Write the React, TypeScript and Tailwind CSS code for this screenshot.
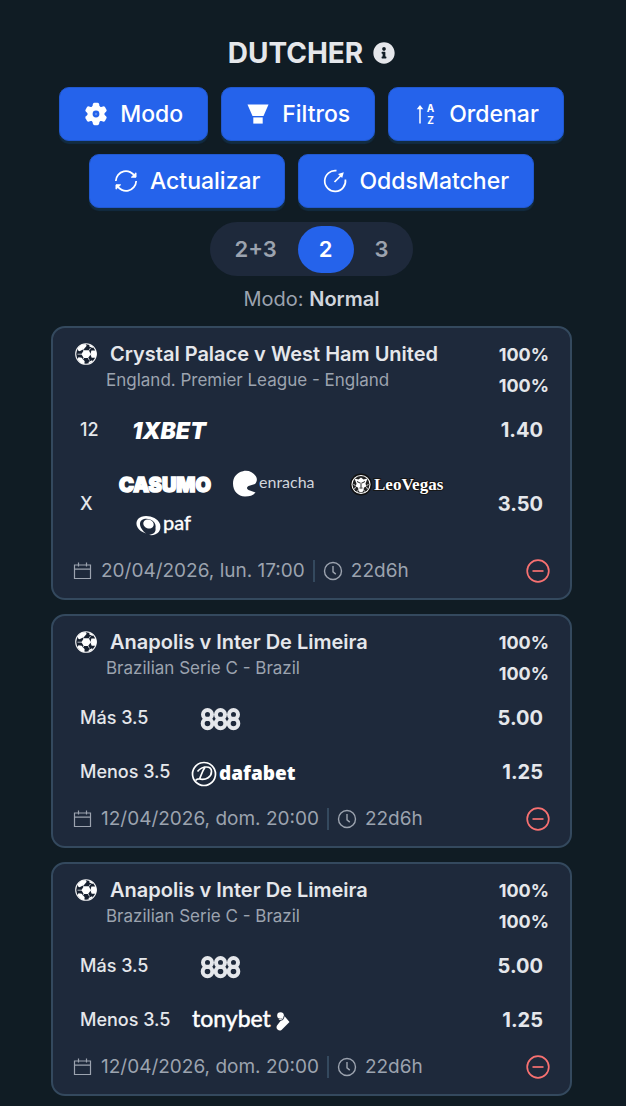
import type { ReactNode } from "react";
import { FaInfoCircle } from "react-icons/fa";

function GearIcon() {
  return (
    <svg viewBox="0 0 24 24" className="size-6" fill="currentColor" aria-hidden="true">
      <path
        fillRule="evenodd"
        d="M12 3.500a8.500 8.500 0 1 0 0 17a8.500 8.500 0 0 0 0-17zM12 8.600a3.400 3.400 0 1 1 0 6.800a3.400 3.400 0 0 1 0-6.800z"
      />
      {[0, 60, 120, 180, 240, 300].map((a) => (
        <path key={a} transform={`rotate(${a} 12 12)`} d="M8 6.500L8.900 2.200Q9.200 .8 10.500 .8h3q1.300 0 1.600 1.400L16 6.500z" />
      ))}
      <circle cx="12" cy="12" r="1.200" opacity=".25" />
    </svg>
  );
}

function FilterIcon() {
  return (
    <svg viewBox="0 0 24 24" className="size-6" fill="currentColor" aria-hidden="true">
      <path d="M1.500 2.500h21L17.500 14h-11z" />
      <path d="M7.300 15.400h9.400v6.200H7.300z" />
    </svg>
  );
}

function SortIcon() {
  return (
    <svg viewBox="0 0 24 24" className="size-6" fill="none" stroke="currentColor" strokeWidth="1.500" aria-hidden="true">
      <path d="M7 21.500V6" />
      <path d="M3.700 7.300L7 3l3.300 4.300z" fill="currentColor" stroke="none" />
      <g fill="currentColor" stroke="none" fontFamily="Inter, sans-serif" fontSize="10" fontWeight="700" textAnchor="middle">
        <text x="17.500" y="9.800">A</text>
        <text x="17.500" y="21.600">Z</text>
      </g>
    </svg>
  );
}

function RefreshIcon() {
  return (
    <svg viewBox="0 0 24 24" className="size-6" fill="none" stroke="currentColor" strokeWidth="1.700" aria-hidden="true">
      <path d="M1.800 12A10.200 10.200 0 0 1 21 7.600" />
      <path d="M22.200 12A10.200 10.200 0 0 1 3 16.400" />
      <path d="M22 3.800v4.400h-4.600z" fill="currentColor" strokeWidth="1" />
      <path d="M2 20.200v-4.400h4.600z" fill="currentColor" strokeWidth="1" />
    </svg>
  );
}

function GaugeIcon() {
  return (
    <svg viewBox="0 0 24 24" className="size-6" fill="none" stroke="currentColor" strokeWidth="1.700" aria-hidden="true">
      <path d="M13.500 1.700A10.400 10.400 0 1 0 22.400 10.500" />
      <path d="M11.500 13l7-7" />
      <path d="M15 4.900L20.800 3.200l-1.600 5.900z" fill="currentColor" stroke="none" />
    </svg>
  );
}

function BallIcon() {
  return (
    <svg viewBox="0 0 24 24" className="size-6 shrink-0" aria-hidden="true">
      <circle cx="12" cy="12" r="10.300" fill="#17202f" stroke="#f4f4f5" strokeWidth="1.100" />
      <g fill="#ffffff">
        <path d="M9.800 8.300h5l2 3.900-2.700 3.900H9.700l-2.300-3.900z" />
        <path d="M4 5.800L7.500 2.800 11.500 2l1.200 1.800-2.700 3.300-4.500 2.200-1.800-1z" />
        <path d="M17.400 8.400h4.300l1 3.600-1 3.800h-4l-1.300-3.200z" />
        <path d="M4.500 15.200l3.200.6 3 3.400-.5 3-4-1.700-2.800-3.400z" />
        <path d="M15.500 2.500l3.800 2.300-.8 1.300-3.200-1.600zM14.500 20l3.500-1.700.8.900-3.800 2.500z" />
      </g>
      <path d="M3.500 12.200h4.500M16 12.300h2M10 9L8.500 6.500M15 8.500l1.500-2.500M10 16l-2 2M14.200 16l1.300 2.500" stroke="#dfe3e8" strokeWidth=".8" />
    </svg>
  );
}

function CalendarIcon() {
  return (
    <svg viewBox="0 0 20 20" className="size-5" fill="none" stroke="currentColor" strokeWidth="1.200" aria-hidden="true">
      <path d="M1.500 4h16v13.500h-16zM1.500 8.200h16M5.500 1.500v4M13.500 1.500v4" />
    </svg>
  );
}

function ClockIcon() {
  return (
    <svg viewBox="0 0 20 20" className="size-5" fill="none" stroke="currentColor" strokeWidth="1.400" aria-hidden="true">
      <circle cx="10" cy="10" r="8.500" />
      <path d="M10 5v5.800l2.800 2.300" />
    </svg>
  );
}

function MinusIcon() {
  return (
    <svg viewBox="0 0 24 24" className="size-6" fill="none" stroke="currentColor" strokeWidth="1.700" aria-hidden="true">
      <circle cx="12" cy="12" r="10.800" />
      <path d="M6.500 12h11" />
    </svg>
  );
}

function Logo({ name, children }: { name: string; children: ReactNode }) {
  return (
    <svg viewBox="0 0 110 40" width="110" height="40" role="img" aria-label={name} className="block shrink-0" fill="#ffffff">
      {children}
    </svg>
  );
}

const logos: Record<string, ReactNode> = {
  "1XBET": (
    <text x="15" y="29" fontFamily="Inter, sans-serif" fontSize="23" fontWeight="900" fontStyle="italic">1XBET</text>
  ),
  Casumo: (
    <text x="2" y="28" fontFamily="Inter, sans-serif" fontSize="20" fontWeight="900" stroke="#ffffff" strokeWidth="1.500">CASUMO</text>
  ),
  enracha: (
    <>
      <path d="M29 12.500C26 8 21 6 16 7.200C10 8.400 6 13 6 19.500C6 27 11 32.500 18 32.500C22.500 32.500 26 31.500 28.500 28.500L21.500 26C19.500 25 19.500 23 21.500 22L28 20C30 18 30.500 15 29 12.500Z" />
      <text x="32" y="24" fontFamily="Lato, sans-serif" fontSize="16" fill="#d1d5db">enracha</text>
    </>
  ),
  LeoVegas: (
    <>
      <circle cx="24" cy="20.500" r="10.300" stroke="#111111" strokeWidth="1.500" />
      <circle cx="24" cy="20.500" r="8.500" fill="#222222" />
      <g transform="translate(-1.500 .5)">
        <path d="M19 14l4 1 2.500-2 2.500 2 4-1-2 5 .8 3-2.300 1-1 4-2 1-2-1-1-4-2.300-1 .8-3z" />
        <path d="M21.500 17l3 1.500M29.500 17l-3 1.500M24 23.500h3M25.500 18v5" stroke="#222222" strokeWidth="1" />
        <path d="M18 20l2 1M18.500 24l2-1M33 20l-2 1M32.500 24l-2-1M22 27l1-2M29 27l-1-2" stroke="#ffffff" strokeWidth=".8" />
      </g>
      <text x="37" y="26" fontFamily="Liberation Serif, serif" fontSize="17" fontWeight="700" stroke="#161616" strokeWidth="2" paintOrder="stroke">LeoVegas</text>
    </>
  ),
  paf: (
    <>
      <path d="M29 29.500C21 27 17 20 21 15C26 9.500 40 12 43 20C45 27 40 32 32 31C37 30 39 28 38.500 24C40 18 33 13.500 27 15C20 17 23 25 29 29.500Z" />
      <ellipse cx="31.500" cy="20" rx="5.300" ry="4.500" transform="rotate(18 31.500 20)" />
      <text x="46" y="26" fontFamily="Lato, sans-serif" fontSize="20" fontWeight="400" stroke="#ffffff" strokeWidth=".4">paf</text>
    </>
  ),
  "888": (
    <g fill="none" stroke="#e5e7eb" strokeWidth="4">
      {[19, 32, 45].map((x) => (
        <g key={x}>
          <circle cx={x + 0.5} cy="16.500" r="4.500" />
          <circle cx={x + 0.5} cy="25.500" r="4.800" />
        </g>
      ))}
    </g>
  ),
  dafabet: (
    <>
      <circle cx="16" cy="22" r="11.500" fill="none" stroke="#ffffff" strokeWidth="1.700" />
      <path d="M17.500 14.500C14.500 18.500 13.500 22.500 11.500 27C18.500 28.500 23.500 24.500 23.500 19.500C23.500 13.500 14.500 13.500 9.500 19.500M7.500 28.500C9.500 26 11.500 26.500 14.500 27.500" fill="none" stroke="#ffffff" strokeWidth="1.700" />
      <text x="31" y="28" fontFamily="Open Sans, sans-serif" fontSize="19" fontWeight="800">dafabet</text>
    </>
  ),
  tonybet: (
    <>
      <text x="4" y="27" fontFamily="Lato, sans-serif" fontSize="23" fontWeight="400" stroke="#ffffff" strokeWidth=".5">tonybet</text>
      <path d="M93.500 12.500a3.500 3.500 0 1 1-4 5.500l3 3-3.500 4.500a3.300 3.300 0 0 0 4.500 4.500L101.500 22z" />
      <circle cx="92.500" cy="15.500" r="3.300" />
      <path d="M90 21.500l5-2 1.500-4" fill="none" stroke="#1e293b" strokeWidth=".9" />
    </>
  ),
};

type Match = {
  id: number;
  title: string;
  league: string;
  date: string;
  remaining: string;
  outcomes: { label: string; odds: string; books: string[] }[];
};

const matches: Match[] = [
  {
    id: 1,
    title: "Crystal Palace v West Ham United",
    league: "England. Premier League - England",
    date: "20/04/2026, lun. 17:00",
    remaining: "22d6h",
    outcomes: [
      { label: "12", odds: "1.40", books: ["1XBET"] },
      { label: "X", odds: "3.50", books: ["Casumo", "enracha", "LeoVegas", "paf"] },
    ],
  },
  {
    id: 2,
    title: "Anapolis v Inter De Limeira",
    league: "Brazilian Serie C - Brazil",
    date: "12/04/2026, dom. 20:00",
    remaining: "22d6h",
    outcomes: [
      { label: "Más 3.5", odds: "5.00", books: ["888"] },
      { label: "Menos 3.5", odds: "1.25", books: ["dafabet"] },
    ],
  },
  {
    id: 3,
    title: "Anapolis v Inter De Limeira",
    league: "Brazilian Serie C - Brazil",
    date: "12/04/2026, dom. 20:00",
    remaining: "22d6h",
    outcomes: [
      { label: "Más 3.5", odds: "5.00", books: ["888"] },
      { label: "Menos 3.5", odds: "1.25", books: ["tonybet"] },
    ],
  },
];

function ActionButton({ icon, children }: { icon: ReactNode; children: ReactNode }) {
  return (
    <button
      type="button"
      className="flex h-[54px] items-center gap-3 rounded-[10px] border border-[#2158cf] bg-[#2563eb] px-6 text-[23px] leading-8 font-medium text-white shadow-[0_3px_1px_#122c42]"
    >
      {icon}
      {children}
    </button>
  );
}

function MatchCard({ match }: { match: Match }) {
  return (
    <article className="rounded-[14px] border-2 border-[#34495e] bg-[#1e293b] pb-[7px]">
      <header className="flex justify-between px-[21px] pt-[11px]">
        <div>
          <div className="flex h-[30px] items-center gap-3">
            <BallIcon />
            <h2 className="text-[20px] leading-7 font-semibold text-gray-200">{match.title}</h2>
          </div>
          <p className="pl-8 text-[17px] leading-[22px] text-[#9ca3af]">{match.league}</p>
        </div>
        <div className="h-16 text-right text-[18px] leading-[31px] font-bold text-gray-200">
          <p>100%</p>
          <p>100%</p>
        </div>
      </header>
      <table className="w-full border-collapse">
        <tbody>
          {match.outcomes.map((o) => (
            <tr key={o.label}>
              <th scope="row" className="pr-[18px] pl-[27px] text-left text-[18px] leading-6 font-medium whitespace-nowrap text-gray-200">
                {o.label}
              </th>
              <td className="w-full py-[7px]">
                <div className="flex flex-wrap">
                  {o.books.map((b) => (
                    <Logo key={b} name={b}>{logos[b]}</Logo>
                  ))}
                </div>
              </td>
              <td className="pr-[27px] text-right text-[20px] leading-6 font-bold text-gray-200">{o.odds}</td>
            </tr>
          ))}
        </tbody>
      </table>
      <footer className="flex h-10 items-center px-5 text-[19px] leading-6 text-[#9ca3af]">
        <CalendarIcon />
        <span className="pl-2">{match.date}</span>
        <span className="mx-2 h-[22px] w-0.5 bg-[#34495e]" />
        <ClockIcon />
        <span className="pl-2">{match.remaining}</span>
        <button type="button" aria-label="Ocultar" className="ml-auto text-[#f87171]">
          <MinusIcon />
        </button>
      </footer>
    </article>
  );
}

export default function App() {
  return (
    <main className="min-h-screen bg-[#101c24] pt-9 pr-[54px] pb-[10px] pl-[51px] font-['Inter',sans-serif]">
      <h1 className="flex h-[34px] items-center justify-center gap-[10px] text-[28px] font-bold text-gray-200">
        DUTCHER
        <FaInfoCircle className="size-[22px]" />
      </h1>
      <div className="mt-[17px] flex flex-wrap justify-center gap-x-[13px] gap-y-[13px]">
        <ActionButton icon={<GearIcon />}>Modo</ActionButton>
        <ActionButton icon={<FilterIcon />}>Filtros</ActionButton>
        <ActionButton icon={<SortIcon />}>Ordenar</ActionButton>
        <ActionButton icon={<RefreshIcon />}>Actualizar</ActionButton>
        <ActionButton icon={<GaugeIcon />}>OddsMatcher</ActionButton>
      </div>
      <div className="mt-[14px] flex justify-center">
        <div className="flex h-[54px] items-center rounded-full bg-[#1e293b] px-[3px] text-[22px] font-semibold text-[#9ca3af]">
          <button type="button" className="h-[47px] rounded-full px-[21px]">2+3</button>
          <button type="button" className="h-[47px] rounded-full bg-[#2563eb] px-[21px] text-white">2</button>
          <button type="button" className="h-[47px] rounded-full px-[21px]">3</button>
        </div>
      </div>
      <p className="mt-[9px] text-center text-[20px] leading-7 text-[#9ca3af]">
        Modo: <strong className="font-semibold text-gray-300">Normal</strong>
      </p>
      <section className="mt-[13px] flex flex-col gap-[14px]">
        {matches.map((m) => (
          <MatchCard key={m.id} match={m} />
        ))}
      </section>
    </main>
  );
}
